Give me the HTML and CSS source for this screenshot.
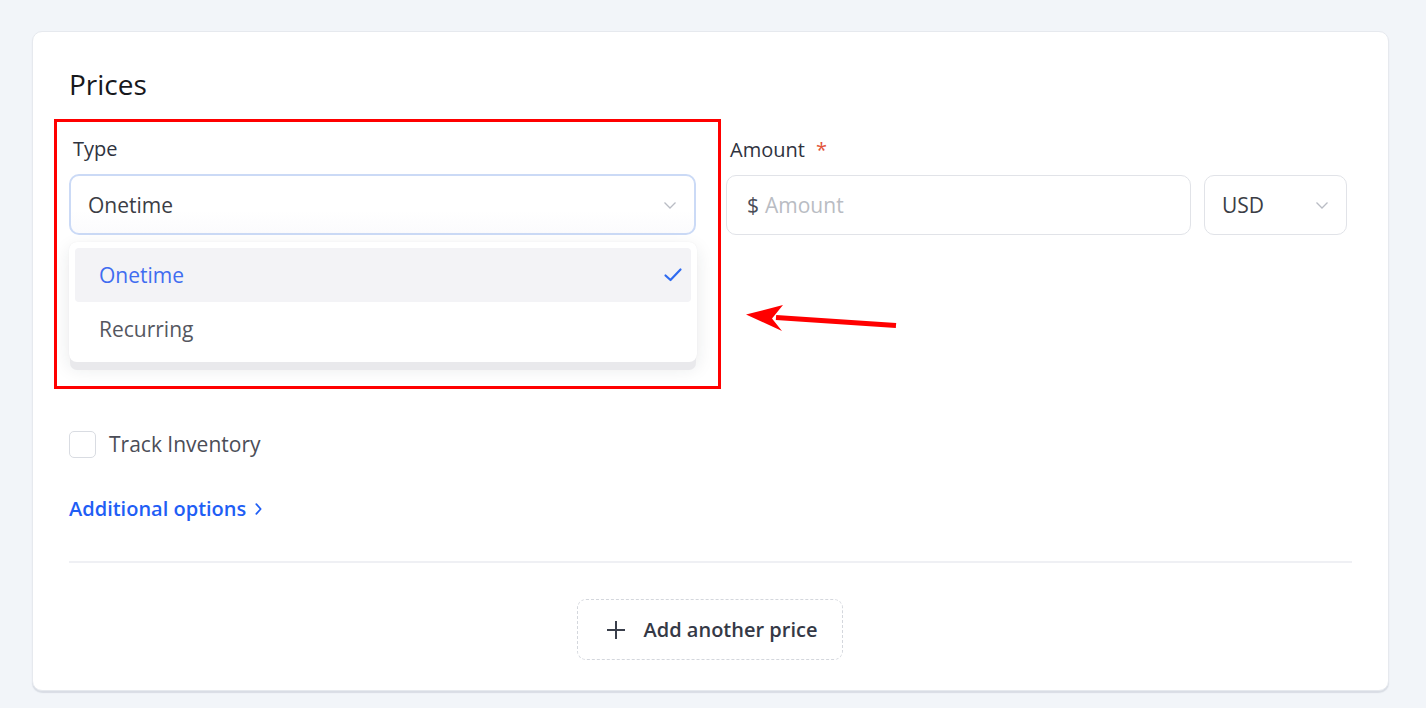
FILE: index.html
```html
<!DOCTYPE html>
<html lang="en">
<head>
<meta charset="utf-8">
<title>Prices</title>
<link rel="stylesheet" href="styles.css">
</head>
<body>
<main class="card">
  <h2 class="title">Prices</h2>
  <div class="fields">
    <div class="field type-field">
      <label class="label">Type</label>
      <div class="select-wrap">
        <div class="select focused">
          <span class="value">Onetime</span>
          <svg class="chev" viewBox="0 0 16 16" width="16" height="16"><path d="M2.5 5.5 8 11l5.5-5.5" fill="none" stroke="#b9bcc4" stroke-width="1.3"/></svg>
        </div>
        <div class="menu">
          <div class="option active">
            <span>Onetime</span>
            <svg class="check" viewBox="0 0 20 20" width="20" height="20"><path d="M2.5 10.5 7.5 15 17.5 4.5" fill="none" stroke="#2f6bf0" stroke-width="2.2" stroke-linecap="round" stroke-linejoin="round"/></svg>
          </div>
          <div class="option"><span>Recurring</span></div>
        </div>
      </div>
    </div>
    <div class="field amount-field">
      <label class="label">Amount <span class="req">*</span></label>
      <div class="input"><span class="cur">$</span><span class="ph">Amount</span></div>
    </div>
    <div class="field usd-field">
      <div class="select small">
        <span class="value">USD</span>
        <svg class="chev" viewBox="0 0 16 16" width="16" height="16"><path d="M2.5 5.5 8 11l5.5-5.5" fill="none" stroke="#b9bcc4" stroke-width="1.3"/></svg>
      </div>
    </div>
  </div>

  <label class="checkrow">
    <span class="box"></span>
    <span class="checktext">Track Inventory</span>
  </label>

  <a class="more">Additional options <svg viewBox="0 0 10 16" width="9" height="14"><path d="M2.5 2.5 7.5 8l-5 5.5" fill="none" stroke="#1f5ef5" stroke-width="2" stroke-linecap="round" stroke-linejoin="round"/></svg></a>

  <hr class="divider">

  <div class="actions">
    <button class="add"><svg viewBox="0 0 20 20" width="20" height="20"><path d="M10 1v18M1 10h18" stroke="#3a3f4b" stroke-width="2"/></svg><span>Add another price</span></button>
  </div>

  <div class="highlight"></div>
  <svg class="arrow" viewBox="0 0 160 30" width="160" height="30"><path d="M150 20.5 30 12.5" stroke="#ff0000" stroke-width="5"/><path d="M0 9.5 37 0 26 13.5 36 26z" fill="#ff0000"/></svg>
</main>
</body>
</html>
```

FILE: styles.css
```css
* { box-sizing: border-box; }
html, body { margin: 0; padding: 0; }
body {
  background: #f2f5f9;
  font-family: "Open Sans", "Liberation Sans", sans-serif;
  color: #3b3d45;
  width: 1426px;
  height: 708px;
  overflow: hidden;
  padding: 31px 0 0 32px;
}
.card {
  position: relative;
  width: 1357px;
  height: 660px;
  background: #fff;
  border: 1px solid #e6e9ee;
  border-radius: 10px;
  box-shadow: 0 2px 1px rgba(200, 205, 215, 0.6);
  padding: 36px 36px 0 36px;
}
.title {
  margin: 0;
  font-size: 28px;
  line-height: 32px;
  font-weight: 500;
  color: #17181c;
}
.fields {
  display: flex;
  align-items: flex-end;
  margin-top: 36px;
}
.field { display: flex; flex-direction: column; position: relative; }
.type-field { width: 627px; }
.amount-field { width: 465px; margin-left: 30px; }
.usd-field { width: 143px; margin-left: 13px; }
.label {
  font-size: 20px;
  line-height: 26px;
  color: #2f3340;
  margin: 0 0 12px 4px;
}
.req { color: #e2553b; margin-left: 6px; }
.select-wrap { position: relative; }
.select {
  height: 61px;
  border: 2px solid #cbdaf6;
  border-radius: 10px;
  display: flex;
  align-items: center;
  justify-content: space-between;
  padding: 0 16px 0 17px;
  font-size: 21px;
  color: #3b3d45;
  background: linear-gradient(#fff 60%, #fbfbfd);
}
.select.small {
  height: 60px;
  border: 1px solid #e1e3e8;
  padding: 0 16px 0 17px;
  background: #fff;
}
.input {
  height: 60px;
  border: 1px solid #e1e3e8;
  border-radius: 10px;
  display: flex;
  align-items: center;
  padding: 0 20px;
  font-size: 21px;
}
.cur { color: #4a4d57; margin-right: 6px; }
.ph { color: #b9bcc3; }
.menu {
  position: absolute;
  left: 0;
  right: -1px;
  top: calc(100% + 7px);
  z-index: 2;
  background: #fff;
  border-radius: 8px;
  padding: 6px 6px;
  box-shadow: 0 9px 0 -1px #e9e9ec, 0 6px 18px rgba(30, 35, 50, 0.10), 0 0 1px rgba(30, 35, 50, 0.08);
}
.option {
  height: 54px;
  display: flex;
  align-items: center;
  justify-content: space-between;
  padding: 0 8px 0 24px;
  font-size: 21px;
  color: #55575f;
  border-radius: 4px;
}
.option.active { background: #f3f3f6; color: #3f6cf0; }
.checkrow {
  display: flex;
  align-items: center;
  margin-top: 195px;
  height: 28px;
}
.box {
  width: 27px;
  height: 27px;
  border: 1px solid #d9dce2;
  border-radius: 5px;
}
.checktext { font-size: 21px; color: #4b4d57; margin-left: 13px; }
.more {
  display: inline-flex;
  align-items: center;
  gap: 8px;
  margin-top: 37px;
  font-size: 20px;
  font-weight: 600;
  color: #1f5ef5;
}
.divider {
  border: 0;
  height: 2px;
  background: #eff0f4;
  margin: 39px 0 0 0;
  width: 1283px;
}
.actions { display: flex; justify-content: center; margin-top: 36px; padding-right: 2px; }
.add {
  height: 61px;
  width: 266px;
  border: 1px dashed #d4d7dd;
  border-radius: 9px;
  background: #fff;
  display: flex;
  align-items: center;
  gap: 18px;
  padding: 0 0 0 28px;
  font-family: inherit;
  font-size: 20px;
  font-weight: 600;
  color: #353946;
}
.highlight {
  position: absolute;
  left: 21px;
  top: 87px;
  width: 667px;
  height: 270px;
  border: 3px solid #ff0000;
  pointer-events: none;
  z-index: 3;
}
.arrow {
  position: absolute;
  left: 713px;
  top: 273px;
  z-index: 3;
}
```
